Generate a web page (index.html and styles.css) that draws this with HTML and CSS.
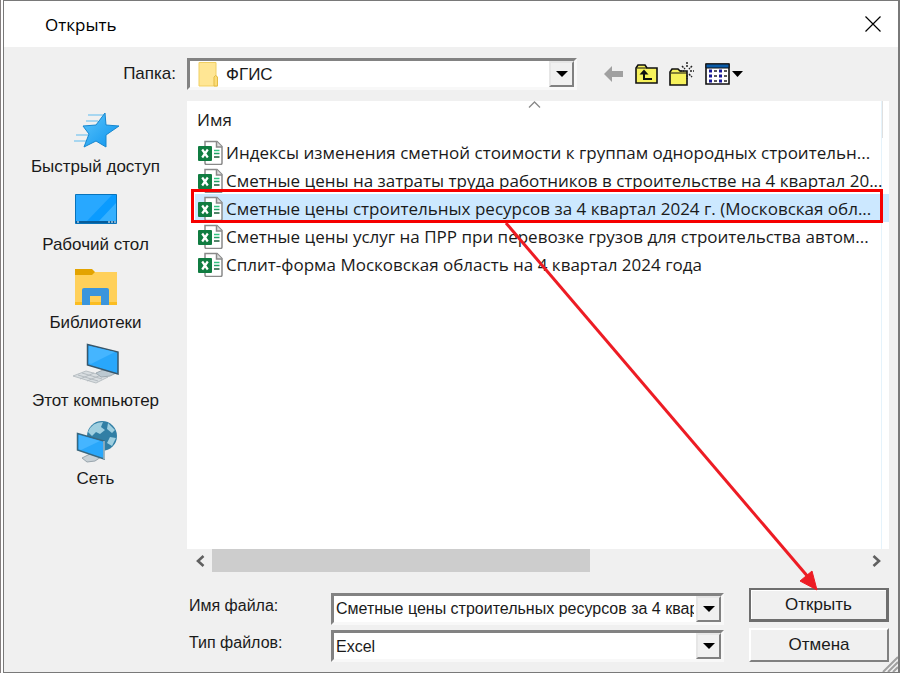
FILE: index.html
```html
<!DOCTYPE html>
<html lang="ru">

<head>
  <meta charset="UTF-8">
  <title>Открыть</title>
  <meta name="viewport" content="width=device-width, initial-scale=1.0">
  <link rel="stylesheet" href="styles.css">
</head>

<body>

  <!-- Иконка файла Excel -->
  <svg class="symbols" aria-hidden="true">
    <symbol id="excel" viewBox="0 0 25 25">
      <path d="M7 1.5h12l5 5V23a1.500 1.500 0 0 1-1.500 1.500h-14A1.500 1.500 0 0 1 7 23z" fill="#fff" stroke="#8a8a8a" stroke-width="1.500" />
      <path d="M18.500 1.500v5.500H24" fill="#ddd" stroke="#8a8a8a" stroke-width="1.500" />
      <path d="M16 10.500h5.500" stroke="#33c481" stroke-width="1.500" />
      <path d="M16 13.500h5.500" stroke="#21a366" stroke-width="1.500" />
      <path d="M16 17h5.500" stroke="#185c37" stroke-width="1.500" />
      <rect y="6" width="14" height="15" rx="1" fill="#107c41" />
      <path d="M4.200 9.500l5.600 8M9.800 9.500l-5.600 8" stroke="#fff" stroke-width="2.200" />
    </symbol>
  </svg>

  <div class="dialog">
    <header class="titlebar">
      <h1>Открыть</h1>
      <button type="button" class="close" aria-label="Закрыть">
        <svg width="16" height="16" viewBox="0 0 16 16"><path d="M.5.5l15 15M15.500.5l-15 15" stroke="#000" stroke-width="1.200" /></svg>
      </button>
    </header>

    <!-- Выбор папки и кнопки -->
    <div class="lookup">
      <label for="folder">Папка:</label>
      <div class="combo">
        <svg class="folder-icon" width="20" height="25" viewBox="0 0 20 25">
          <path d="M1 .5h17V14l1.500 1V24H1z" fill="#ffe694" stroke="#f0cf63" />
          <path d="M16 24v-9l1.500-1.500 2 1.500v9z" fill="#fbdc78" stroke="#e3bb45" />
        </svg>
        <select id="folder" class="with-icon">
          <option>ФГИС</option>
        </select>
        <span class="arrow"></span>
      </div>
      <div class="tools">
        <button type="button" aria-label="Назад" disabled>
          <svg width="20" height="16" viewBox="0 0 20 16"><path d="M0 8l8-8v5h11v6H8v5z" fill="#a0a0a0" /></svg>
        </button>
        <button type="button" aria-label="На один уровень вверх">
          <svg width="23" height="20" viewBox="0 0 23 20">
            <path d="M1 19V4l2-3h7l2 3h10v15z" fill="#f7f25c" stroke="#111" stroke-width="1.600" />
            <path d="M2 4h10" stroke="#111" />
            <path d="M9 7v8h8" fill="none" stroke="#111" stroke-width="2" />
            <path d="M4.500 10.500L9 5.500l4.500 5z" fill="#111" />
          </svg>
        </button>
        <button type="button" aria-label="Создание новой папки">
          <svg width="25" height="24" viewBox="0 0 25 24">
            <path d="M1 23V10l2-3h6l2 2h7v14z" fill="#f7f25c" stroke="#111" stroke-width="1.600" />
            <path d="M2 11h16" stroke="#111" />
            <path d="M18 0v6M18 13v4M11 9h4M21 9h4M13 4l3 3M23 4l-3 3M20 12l3 3" stroke="#222" stroke-width="1.500" stroke-dasharray="2 1" />
          </svg>
        </button>
        <button type="button" aria-label="Меню вида">
          <svg width="38" height="22" viewBox="0 0 38 22">
            <path d="M1 1h23v20H1z" fill="#fff" stroke="#111" stroke-width="1.600" />
            <path d="M1 1h23v4H1z" fill="#0a5ba8" stroke="#111" />
            <path d="M4 8h3M4 13h3M4 18h3M14 8h3M14 13h3M14 18h3" stroke="#1a1a99" stroke-width="3" />
            <path d="M9 8h3M9 13h3M9 18h3M19 8h3M19 13h3M19 18h3" stroke="#222" stroke-width="1.500" />
            <path d="M27 8h11l-5.500 6z" fill="#000" />
          </svg>
        </button>
      </div>
    </div>

    <div class="content">
      <nav class="places">
        <a href="#">
          <svg width="48" height="48" viewBox="0 0 48 48">
            <defs>
              <linearGradient id="blue" x1="0" y1="0" x2="1" y2="1">
                <stop offset="0" stop-color="#5cc5fb" />
                <stop offset="1" stop-color="#0b93ee" />
              </linearGradient>
            </defs>
            <path d="M16 8h17M14 14h12M4 28h12M2 34h14" stroke="#8fcdf0" stroke-width="1.500" />
            <path d="M33 6l1 12 13 1-13 9v12l-10-6-12 6 5-13-6-8 13-1z" fill="url(#blue)" stroke="#1787cf" stroke-linejoin="round" />
          </svg>
          Быстрый доступ
        </a>
        <a href="#">
          <svg width="48" height="48" viewBox="0 0 48 48">
            <path d="M3.500 9.500h41v29h-41z" fill="#0a9bff" stroke="#0873bb" />
            <path d="M4 10h36L15 36H4z" fill="#28a8ff" />
            <path d="M44 18v18H27z" fill="#35b0ff" />
            <path d="M4 37h40" stroke="#075c9a" stroke-width="2" />
            <path d="M5 37h2M36 37h2M39 37h2M42 37h2" stroke="#fff" />
          </svg>
          Рабочий стол
        </a>
        <a href="#">
          <svg width="48" height="48" viewBox="0 0 48 48">
            <path d="M3 9h42v33H3z" fill="#ffd05a" />
            <path d="M3 6h17l3 3-3 3H3z" fill="#e3a300" />
            <path d="M3 39h42v3H3z" fill="#fbbd22" />
            <path d="M10 42V27q0-2 2-2h23q2 0 2 2v15h-8v-9H18v9z" fill="#3b95dc" />
          </svg>
          Библиотеки
        </a>
        <a href="#">
          <svg width="48" height="48" viewBox="0 0 48 48">
            <path d="M1 35l13-5 22 6-12 6z" fill="#d8dde0" stroke="#b9c0c4" />
            <path d="M6 34l20 6M10 32l20 6M8 38l14-6M15 40l14-6" stroke="#b4bbc0" />
            <path d="M24 32l7-3 13 3-6 3-9 1z" fill="#bcc9d1" stroke="#9faab1" />
            <path d="M15.500 3.500L46 11v22l-30.500-9z" fill="#29a7fb" stroke="#39576b" stroke-width="1.500" />
            <path d="M17 5l26 6-24 12-2-1z" fill="#45b5ff" />
          </svg>
          Этот компьютер
        </a>
        <a href="#">
          <svg width="48" height="48" viewBox="0 0 48 48">
            <circle cx="30" cy="17" r="15" fill="#317fa5" />
            <path d="M16 13Q20 3 31 3l-2 5 4 3-5 4-4-2-4 4zM36 4l7 7-3 3-5-4zM38 18l6 1-4 8-5-3z" fill="#9fcfe0" />
            <path d="M10 39l8-4 11 3-6 4-8 1z" fill="#c8d1d6" stroke="#99a5ad" />
            <path d="M5.500 14.500L32 22v18L5.500 31z" fill="#29a7fb" stroke="#39677f" stroke-width="1.500" />
            <path d="M7 16l21 6L9 31l-2-1z" fill="#45b5ff" />
            <path d="M32 22v18" stroke="#d5e2e8" />
          </svg>
          Сеть
        </a>
      </nav>

      <div class="files">
        <div class="list">
          <svg class="sort" width="13" height="7" viewBox="0 0 13 7"><path d="M1 6.500L6.500 1 12 6.500" fill="none" stroke="#888" stroke-width="1.300" /></svg>
          <table>
            <thead>
              <tr><th scope="col">Имя</th><td></td></tr>
            </thead>
            <tbody>
              <tr>
                <td><div class="file"><svg width="25" height="25"><use href="#excel" /></svg>Индексы изменения сметной стоимости к группам однородных строительн...</div></td>
                <td class="edge"></td>
              </tr>
              <tr>
                <td><div class="file"><svg width="25" height="25"><use href="#excel" /></svg>Сметные цены на затраты труда работников в строительстве на 4 квартал 20...</div></td>
                <td class="edge"></td>
              </tr>
              <tr class="selected">
                <td><div class="file"><svg width="25" height="25"><use href="#excel" /></svg>Сметные цены строительных ресурсов за 4 квартал 2024 г. (Московская обл...</div></td>
                <td class="edge"></td>
              </tr>
              <tr>
                <td><div class="file"><svg width="25" height="25"><use href="#excel" /></svg>Сметные цены услуг на ПРР при перевозке грузов для строительства автом...</div></td>
                <td class="edge"></td>
              </tr>
              <tr>
                <td><div class="file"><svg width="25" height="25"><use href="#excel" /></svg>Сплит-форма Московская область на 4 квартал 2024 года</div></td>
                <td class="edge"></td>
              </tr>
            </tbody>
          </table>

          <!-- Стрелка к кнопке "Открыть" -->
          <svg class="pointer" width="320" height="372" viewBox="0 0 320 372">
            <path d="M2 2l303 355" stroke="#ed1c24" stroke-width="3" />
            <path d="M313 369l-17-9 12-10z" fill="#ed1c24" stroke="#ed1c24" />
          </svg>
        </div>

        <div class="scrollbar">
          <button type="button" aria-label="Влево"><svg width="10" height="12" viewBox="0 0 10 12"><path d="M8.500 1L3 6l5.500 5" fill="none" stroke="#606060" stroke-width="2.600" /></svg></button>
          <div class="track"><div class="thumb"></div></div>
          <button type="button" aria-label="Вправо"><svg width="10" height="12" viewBox="0 0 10 12"><path d="M1.500 1L7 6l-5.500 5" fill="none" stroke="#606060" stroke-width="2.600" /></svg></button>
        </div>

        <!-- Имя и тип файла -->
        <form class="form">
          <div class="fields">
            <label for="filename">Имя файла:</label>
            <div class="combo">
              <input type="text" id="filename" value="Сметные цены строительных ресурсов за 4 квартал 2024 г.">
              <button type="button" class="arrow" aria-label="Показать список"></button>
            </div>
            <label for="filetype">Тип файлов:</label>
            <div class="combo">
              <select id="filetype">
                <option>Excel</option>
              </select>
              <span class="arrow"></span>
            </div>
          </div>
          <div class="actions">
            <button type="button" class="btn default">Открыть</button>
            <button type="button" class="btn">Отмена</button>
          </div>
        </form>
      </div>
    </div>

    <svg class="grip" width="16" height="16" viewBox="0 0 16 16"><path d="M1 16L16 1M6 16L16 6M11 16l5-5" stroke="#a0a0a0" stroke-width="2" /></svg>
  </div>

</body>

</html>
```

FILE: styles.css
```css
* {
  box-sizing: border-box;
}

body {
  margin: 0;
  padding-left: 2px;
  border-left: 1px solid #857f7f;
  background: #fff;
  color: #1a1a1a;
  font-family: "Liberation Sans", Arial, sans-serif;
  font-size: 17px;
}

button,
input,
select {
  font: inherit;
  color: inherit;
}

.symbols {
  display: none;
}

.dialog {
  position: relative;
  display: flex;
  flex-direction: column;
  min-height: 100vh;
  background: #f0f0f0;
  border: 1px solid #797979;
  border-right-width: 2px;
}

/* Заголовок окна */
.titlebar {
  display: flex;
  justify-content: space-between;
  align-items: center;
  height: 46px;
  padding: 0 17px 0 41px;
  background: #fff;
}

.titlebar h1 {
  margin: 0;
  color: #000;
  font-family: "Open Sans", sans-serif;
  font-size: 17px;
  font-weight: normal;
}

.close,
.tools button,
.scrollbar button {
  display: flex;
  padding: 0;
  border: none;
  background: none;
}

/* Выбор папки */
.lookup {
  display: flex;
  align-items: center;
  padding: 11px 0;
}

.lookup label {
  width: 183px;
  padding-right: 11px;
  text-align: right;
}

.lookup .combo {
  width: 390px;
}

.tools {
  display: flex;
  align-items: center;
  gap: 11px;
  margin-left: 27px;
}

/* Поля со списком */
.combo {
  position: relative;
  display: flex;
  height: 32px;
  background: #fff;
  border: 3px solid #828282;
  border-right-color: #f8f8f8;
  border-bottom-color: #f8f8f8;
}

.combo input,
.combo select {
  flex: 1;
  min-width: 0;
  padding: 0 2px;
  border: none;
  outline: none;
  background: none;
  appearance: none;
}

.combo select.with-icon {
  padding-left: 36px;
}

.folder-icon {
  position: absolute;
  left: 8px;
  top: 1px;
}

.arrow {
  display: flex;
  align-items: center;
  justify-content: center;
  width: 25px;
  padding: 0;
  background: #f0f0f0;
  border: 2px solid #808080;
  border-left-color: #e6e6e6;
  border-top-color: #e6e6e6;
  pointer-events: none;
}

.arrow::before {
  content: "";
  border: 6px solid transparent;
  border-top-color: #000;
  border-bottom: none;
}

/* Панель слева */
.content {
  flex: 1;
  display: flex;
  padding-right: 9px;
}

.places {
  display: flex;
  flex-direction: column;
  gap: 6px;
  width: 183px;
  padding-top: 6px;
}

.places a {
  display: flex;
  flex-direction: column;
  align-items: center;
  color: inherit;
  line-height: 24px;
  text-decoration: none;
}

.files {
  flex: 1;
  display: flex;
  flex-direction: column;
  min-width: 0;
}

/* Список файлов */
.list {
  position: relative;
  flex: 1;
  padding-left: 8px;
  background: linear-gradient(#e5f3fb, #e5f3fb) right 7px top / 1px 100% no-repeat #fff;
}

.sort {
  position: absolute;
  left: 341px;
  top: 0;
}

.list table {
  width: 100%;
  border-collapse: collapse;
  table-layout: fixed;
  font-family: "Open Sans", sans-serif;
  font-size: 17px;
}

.list th {
  height: 37px;
  padding: 0 2px;
  border-right: 1px solid #e0e0e0;
  font-weight: normal;
  text-align: left;
}

.list td {
  height: 28px;
  padding: 0 0 0 3px;
}

.list thead td,
.list .edge {
  width: 7px;
  padding: 0;
}

.file {
  display: flex;
  align-items: center;
  gap: 3px;
  height: 28px;
  white-space: nowrap;
}

.file svg {
  flex-shrink: 0;
}

.selected {
  position: relative;
  background: #cce8ff;
}

/* Красная рамка вокруг выбранного файла */
.selected td:first-child::after {
  content: "";
  position: absolute;
  top: -5px;
  right: 6px;
  bottom: -1px;
  left: -4px;
  border: 3px solid #f60000;
}

.pointer {
  position: absolute;
  top: 120px;
  left: 317px;
  pointer-events: none;
}

/* Полоса прокрутки */
.scrollbar {
  display: flex;
  height: 23px;
}

.scrollbar button {
  width: 25px;
  align-items: center;
  justify-content: center;
}

.track {
  flex: 1;
}

.thumb {
  width: 58%;
  height: 100%;
  background: #cdcdcd;
}

/* Нижняя форма */
.form {
  display: flex;
  gap: 25px;
  padding: 16px 0 10px;
}

.fields {
  flex: 1;
  display: grid;
  grid-template-columns: 144px 1fr;
  row-gap: 5px;
  padding-top: 5px;
  font-size: 16px;
}

.fields label {
  padding-left: 2px;
  line-height: 26px;
}

.actions {
  display: flex;
  flex-direction: column;
  gap: 6px;
  width: 140px;
}

.btn {
  height: 34px;
  padding: 0;
  background: #f0f0f0;
  border: 2px solid #fff;
  border-right-color: #808080;
  border-bottom-color: #808080;
}

.btn.default {
  border: 3px solid #6e6e6e;
  border-top-width: 2px;
  border-left-width: 2px;
  box-shadow: inset 1px 1px #fff;
}

.grip {
  position: absolute;
  right: 0;
  bottom: 0;
}
```
